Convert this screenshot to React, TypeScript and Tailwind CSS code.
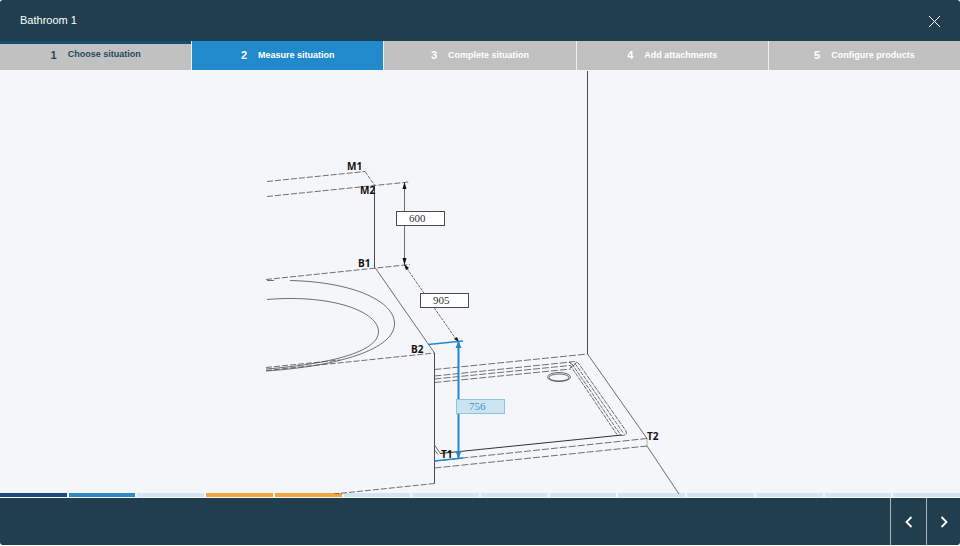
import { useState } from "react";
import clsx from "clsx";

const STEPS = [
  "Choose situation",
  "Measure situation",
  "Complete situation",
  "Add attachments",
  "Configure products",
];

const PROGRESS = [
  "bg-[#1f4a80]",
  "bg-[#2f88c2]",
  "bg-[#d3e5f0]",
  "bg-[#f0a63f]",
  "bg-[#f0a63f]",
  ...Array<string>(9).fill("bg-[#d3e5f0]"),
];

function Stepper({ current, onSelect }: { current: number; onSelect: (step: number) => void }) {
  return (
    <nav aria-label="Steps" className="grid grid-cols-5 gap-px bg-[#eef1f4]">
      {STEPS.map((label, i) => (
        <button
          key={label}
          type="button"
          aria-current={i === current ? "step" : undefined}
          onClick={() => onSelect(i)}
          className={clsx(
            "flex h-[29px] items-center justify-center gap-[11px] font-bold",
            i < current && "border-t-3 border-[#154c72] bg-[#c1c1c1] pb-1 text-[#25485c]",
            i === current && "bg-[#218acd] text-white",
            i > current && "bg-[#c1c1c1] text-white",
          )}
        >
          <span className="text-[11px]">{i + 1}</span>
          <span className="text-[9px]">{label}</span>
        </button>
      ))}
    </nav>
  );
}

function MeasureField({ name, value, active, className }: {
  name: string;
  value: string;
  active?: boolean;
  className: string;
}) {
  return (
    <input
      type="text"
      aria-label={name}
      defaultValue={value}
      className={clsx(
        "absolute h-[15px] w-[49px] border pl-3 font-['Liberation_Serif',serif] text-[11px] outline-none",
        active ? "border-[#8fc3e2] bg-[#cbe4f2] text-[#3d93c9]" : "border-[#4a4a4a] bg-white text-[#333]",
        className,
      )}
    />
  );
}

function Drawing() {
  return (
    <svg viewBox="266 70 428 424" className="block h-[424px] w-[428px]" fill="none" stroke="#4b4b50" strokeWidth="0.8">
      {/* walls and floor */}
      <path d="M587.5 71V354" strokeWidth="1" />
      <path d="M587.5 354L647 438.5M647 446L679 494" />
      <path d="M647 438.5V446" strokeWidth="0.4" />
      <path d="M434.5 369.5L587.5 354" strokeDasharray="7 2" />

      {/* mirror */}
      <path d="M267 181.5L365 171.5M267 196.5L409 182" strokeDasharray="6 2" />
      <path d="M365 171.5L374.5 185" strokeDasharray="4 1" />
      <path d="M374.5 185V267.5" strokeWidth="1" />

      {/* bath */}
      <path d="M266 279.5L410 264.5M266 370.5L434.5 353M434.5 483.5L334 494" strokeDasharray="6 2" />
      <path d="M375 267.5L434.5 353" />
      <path d="M434.5 353V483.5" strokeWidth="1" />
      <path d="M267 280.5H274M290 280.5C355 282 395 302 394.5 324C394 349 340 366 266 371" />
      <path d="M267 299.5C333 294 379 312 378.5 332C378 352 330 364 266 369" />
      <path d="M266 367.5L340 360" strokeDasharray="6 2" />

      {/* shower tray */}
      <path
        d="M434.5 376L571 362M434.5 379L570 365.5M434.5 382.5L571 369M434.5 461L647 438.5M434.5 468L647 446"
        strokeDasharray="7 2"
      />
      <path d="M570 362.500Q575 360 579 364L626 431Q628 435 622 435.5" strokeDasharray="5 1" />
      <path d="M570 365L618 436M572 364L621 435.500M575 363.500L623 432.500M569 362L574 366M570 368L576 363" strokeDasharray="4 1" />
      <path d="M440 453.5L622 435" strokeWidth="1" stroke="#333" />
      <path d="M434.5 445L440 453M434.500 450L438 454.500" />
      <ellipse cx="559" cy="377" rx="11.5" ry="4.5" />
      <ellipse cx="559" cy="377.500" rx="10" ry="3.500" />

      {/* dimension lines */}
      <path d="M404.5 183V265" />
      <path d="M404.5 265L458 342" strokeDasharray="3 1" />
      <g fill="#111" stroke="none">
        <path d="M404.5 182L406.5 189H402.5ZM404.5 265L406.5 258H402.5Z" />
        <path d="M404 264L409 268L406 270ZM459 342L454 339L457 337Z" />
      </g>
      <g stroke="#2388cb">
        <path d="M428 344.5L463 341M434.5 461L463 458" strokeWidth="1.5" />
        <path d="M458.5 342V459" strokeWidth="2" />
        <path d="M458.5 341L461.5 348H455.5ZM458.5 459L461.5 451H455.5Z" fill="#2388cb" stroke="none" />
      </g>

      <g fill="#111" stroke="none" className="font-['Open_Sans','Noto_Sans',sans-serif] text-[10px] font-bold">
        <text x="347" y="170">M1</text>
        <text x="360" y="194">M2</text>
        <text x="358" y="267">B1</text>
        <text x="411" y="353">B2</text>
        <text x="441" y="458">T1</text>
        <text x="647" y="440">T2</text>
      </g>
    </svg>
  );
}

export default function App() {
  const [step, setStep] = useState(1);

  return (
    <div className="flex min-h-screen flex-col bg-white pb-px font-['Liberation_Sans',Arial,sans-serif]">
      <div className="flex flex-1 flex-col overflow-hidden rounded-[3px] bg-[#f4f6fa]">
        <header className="flex h-[41px] items-center justify-between bg-[#213e4e] px-5 text-white">
          <h1 className="text-[11px]">Bathroom 1</h1>
          <button type="button" aria-label="Close" className="pt-[2px]">
            <svg viewBox="0 0 11 11" className="size-[11px]" stroke="currentColor" strokeWidth="1">
              <path d="M0 0L11 11M11 0L0 11" />
            </svg>
          </button>
        </header>

        <Stepper current={step} onSelect={setStep} />

        <main className="flex flex-1 justify-center">
          <div className="relative -mb-[4px]">
            <Drawing />
            <MeasureField name="M2 to B1" value="600" className="top-[141px] left-[130px]" />
            <MeasureField name="B1 to B2" value="905" className="top-[223px] left-[154px]" />
            <MeasureField name="B2 to T1" value="756" active className="top-[329px] left-[190px]" />
          </div>
        </main>

        <div className="mb-px flex gap-[2px]">
          {PROGRESS.map((color, i) => (
            <div key={i} className={clsx("h-1 flex-1", color)} />
          ))}
        </div>

        <footer className="flex h-[47px] justify-end bg-[#213e4e] text-white">
          <button type="button" aria-label="Previous" className="flex w-9 items-center justify-center border-l border-[#a9b6be]">
            <svg viewBox="0 0 8 12" className="h-3 w-2" fill="none" stroke="currentColor" strokeWidth="1.8">
              <path d="M6.500 1L1.500 6L6.500 11" />
            </svg>
          </button>
          <button type="button" aria-label="Next" className="flex w-[34px] items-center justify-center border-l border-[#a9b6be]">
            <svg viewBox="0 0 8 12" className="h-3 w-2" fill="none" stroke="currentColor" strokeWidth="1.8">
              <path d="M1.500 1L6.500 6L1.500 11" />
            </svg>
          </button>
        </footer>
      </div>
    </div>
  );
}
